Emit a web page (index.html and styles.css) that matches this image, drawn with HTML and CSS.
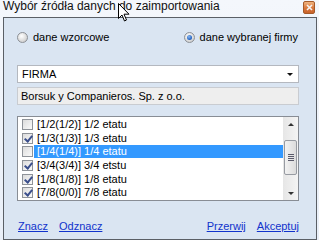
FILE: index.html
```
<!DOCTYPE html>
<html>
<head>
<meta charset="utf-8">
<title>Wybór źródła danych do zaimportowania</title>
<link rel="stylesheet" href="styles.css">
</head>
<body>
<div class="window">
  <div class="titlebar">
    <span class="title">Wybór źródła danych do zaimportowania</span>
    <span class="close"><svg width="7" height="7" viewBox="0 0 7 7"><path d="M1 1L6 6M6 1L1 6" stroke="#f4f4f4" stroke-width="1.6"/></svg></span>
  </div>
  <div class="client">
    <div class="radios">
      <label class="radio"><span class="dot"></span>dane wzorcowe</label>
      <label class="radio"><span class="dot on"></span>dane wybranej firmy</label>
    </div>
    <div class="combo">FIRMA<span class="arrow"></span></div>
    <div class="field">Borsuk y Companieros. Sp. z o.o.</div>
    <div class="list">
      <div class="items">
        <div class="item"><span class="box"></span><span class="text">[1/2(1/2)] 1/2 etatu</span></div>
        <div class="item"><span class="box checked"></span><span class="text">[1/3(1/3)] 1/3 etatu</span></div>
        <div class="item selected"><span class="box"></span><span class="text">[1/4(1/4)] 1/4 etatu</span></div>
        <div class="item"><span class="box checked"></span><span class="text">[3/4(3/4)] 3/4 etstu</span></div>
        <div class="item"><span class="box checked"></span><span class="text">[1/8(1/8)] 1/8 etatu</span></div>
        <div class="item"><span class="box checked"></span><span class="text">[7/8(0/0)] 7/8 etatu</span></div>
      </div>
      <div class="scrollbar">
        <span class="sarrow up"></span>
        <span class="thumb"><span class="grip"></span></span>
        <span class="sarrow down"></span>
      </div>
    </div>
    <div class="links">
      <div class="group"><a href="#">Znacz</a><a href="#">Odznacz</a></div>
      <div class="group"><a href="#">Przerwij</a><a href="#">Akceptuj</a></div>
    </div>
  </div>
  <svg class="cursor" width="12" height="19" viewBox="0 0 12 19"><path d="M0.5 0.5V15.5L4 12L6.5 18L8.5 17L6 11.2H11Z" fill="#fff" stroke="#000" stroke-width="1"/></svg>
</div>
</body>
</html>
```
FILE: styles.css
```
body{margin:0; font-family:"Liberation Sans", Arial, sans-serif; font-size:11px; color:#000; background:#eef3fa;}

.window{position:relative; width:319px; height:240px; background:linear-gradient(#f4f7fc,#e9eff8); overflow:hidden;}

.titlebar{height:17px; display:flex; align-items:flex-start; justify-content:space-between; padding-left:3px; padding-right:4px;}
.title{font-size:12px; line-height:14px; margin-top:-1px; color:#111;}
.close{width:12px; height:13px; margin-top:1px; border:1px solid #a55a2a; border-radius:2px; background:linear-gradient(#f0b481,#d9773c 55%,#c9632b); display:flex; align-items:center; justify-content:center; box-sizing:border-box;}

.client{margin:0 2px 0 3px; height:221px; border:1px solid #5a5f66; background:#dae5f2; padding:0 17px 0 13px; display:flex; flex-direction:column;}

.radios{display:flex; justify-content:space-between; height:14px; margin-top:12px; padding-right:1px;}
.radio{display:flex; align-items:center; gap:5px;}
.dot{width:11px; height:11px; border-radius:50%; border:1px solid #8c9096; box-sizing:border-box; background:radial-gradient(circle at 40% 35%,#ffffff,#d4d4d4 70%,#c2c2c2); position:relative;}
.dot.on::after{content:""; position:absolute; left:2px; top:2px; width:5px; height:5px; border-radius:50%; background:radial-gradient(circle at 40% 35%,#8ab8f0,#1e5fc0 70%,#17408a);}

.combo{margin-top:21px; height:18px; box-sizing:border-box; border:1px solid #b4b8bf; background:#fff; padding:0 4px; line-height:16px; position:relative;}
.arrow{position:absolute; right:5px; top:7px; width:0; height:0; border-left:3px solid transparent; border-right:3px solid transparent; border-top:3px solid #111;}

.field{margin-top:4px; height:18px; box-sizing:border-box; border:1px solid #c9ccd1; background:#eeeeee; padding:0 3px; line-height:16px;}

.list{margin-top:11px; height:85px; box-sizing:border-box; border:1px solid #888d95; background:#fff; display:flex; overflow:hidden;}
.items{flex:1; overflow:hidden; padding-top:1px;}
.item{height:13.6px; display:flex; align-items:center; padding-left:4px;}
.box{width:11px; height:11px; box-sizing:border-box; border:1px solid #8f9399; background:linear-gradient(135deg,#dcdcdc,#fafafa); margin-right:1px; position:relative;}
.box.checked::after{content:""; position:absolute; left:3px; top:0; width:3px; height:6px; border:solid #3b4f8c; border-width:0 2px 2px 0; transform:rotate(40deg);}
.text{padding:0 2px 0 3px; line-height:13px;}
.item.selected .text{flex:1; background:#3399ff; color:#fff;}

.scrollbar{width:15px; background:linear-gradient(90deg,#e6e6e6,#f4f4f4); display:flex; flex-direction:column; align-items:center;}
.sarrow{width:0; height:0; border-left:3px solid transparent; border-right:3px solid transparent;}
.sarrow.up{margin-top:6px; border-bottom:3px solid #333;}
.sarrow.down{margin-top:auto; margin-bottom:5px; border-top:3px solid #333;}
.thumb{margin-top:14px; width:13px; height:35px; box-sizing:border-box; border:1px solid #979ba2; border-radius:2px; background:linear-gradient(90deg,#f2f2f2,#dcdcdc); display:flex; align-items:center; justify-content:center;}
.grip{width:6px; height:7px; background:repeating-linear-gradient(#5a5a6a 0 1px,transparent 1px 2px);}

.links{margin-top:19px; display:flex; justify-content:space-between; padding-left:1px;}
.group{display:flex; gap:11px;}
.links a{color:#1133cc; text-decoration:underline;}
.links a:visited{color:#1133cc;}

.cursor{position:absolute; left:118px; top:3px;}
```
